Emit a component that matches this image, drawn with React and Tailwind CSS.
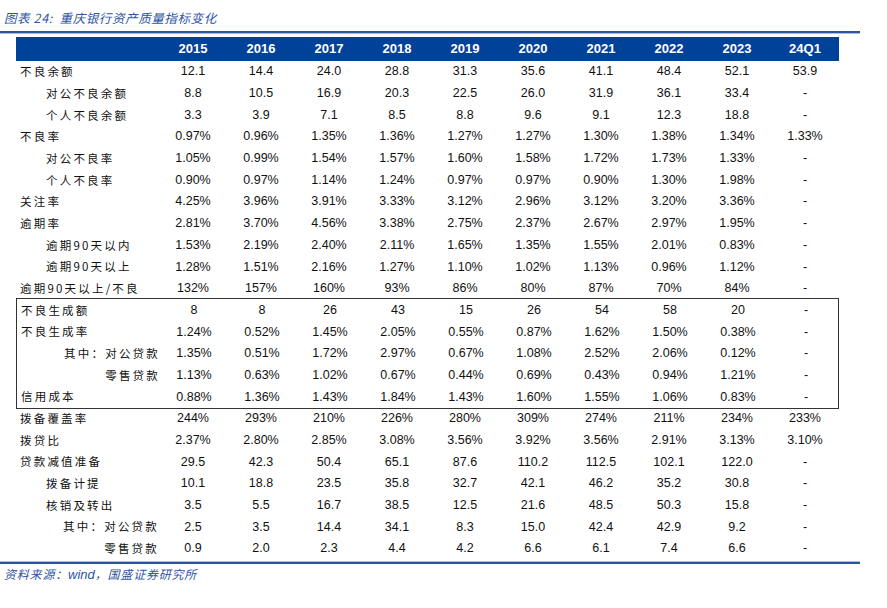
const years = ["2015", "2016", "2017", "2018", "2019", "2020", "2021", "2022", "2023", "24Q1"];

// level: 0 = flush left, 1 = indented, 2 = right aligned sub-item
const rows = [
  { label: "不良余额", level: 0, v: ["12.1", "14.4", "24.0", "28.8", "31.3", "35.6", "41.1", "48.4", "52.1", "53.9"] },
  { label: "对公不良余额", level: 1, v: ["8.8", "10.5", "16.9", "20.3", "22.5", "26.0", "31.9", "36.1", "33.4", "-"] },
  { label: "个人不良余额", level: 1, v: ["3.3", "3.9", "7.1", "8.5", "8.8", "9.6", "9.1", "12.3", "18.8", "-"] },
  { label: "不良率", level: 0, v: ["0.97%", "0.96%", "1.35%", "1.36%", "1.27%", "1.27%", "1.30%", "1.38%", "1.34%", "1.33%"] },
  { label: "对公不良率", level: 1, v: ["1.05%", "0.99%", "1.54%", "1.57%", "1.60%", "1.58%", "1.72%", "1.73%", "1.33%", "-"] },
  { label: "个人不良率", level: 1, v: ["0.90%", "0.97%", "1.14%", "1.24%", "0.97%", "0.97%", "0.90%", "1.30%", "1.98%", "-"] },
  { label: "关注率", level: 0, v: ["4.25%", "3.96%", "3.91%", "3.33%", "3.12%", "2.96%", "3.12%", "3.20%", "3.36%", "-"] },
  { label: "逾期率", level: 0, v: ["2.81%", "3.70%", "4.56%", "3.38%", "2.75%", "2.37%", "2.67%", "2.97%", "1.95%", "-"] },
  { label: "逾期90天以内", level: 1, v: ["1.53%", "2.19%", "2.40%", "2.11%", "1.65%", "1.35%", "1.55%", "2.01%", "0.83%", "-"] },
  { label: "逾期90天以上", level: 1, v: ["1.28%", "1.51%", "2.16%", "1.27%", "1.10%", "1.02%", "1.13%", "0.96%", "1.12%", "-"] },
  { label: "逾期90天以上/不良", level: 0, v: ["132%", "157%", "160%", "93%", "86%", "80%", "87%", "70%", "84%", "-"] },
];

const boxed = [
  { label: "不良生成额", level: 0, v: ["8", "8", "26", "43", "15", "26", "54", "58", "20", "-"] },
  { label: "不良生成率", level: 0, v: ["1.24%", "0.52%", "1.45%", "2.05%", "0.55%", "0.87%", "1.62%", "1.50%", "0.38%", "-"] },
  { label: "其中：对公贷款", level: 2, v: ["1.35%", "0.51%", "1.72%", "2.97%", "0.67%", "1.08%", "2.52%", "2.06%", "0.12%", "-"] },
  { label: "零售贷款", level: 2, v: ["1.13%", "0.63%", "1.02%", "0.67%", "0.44%", "0.69%", "0.43%", "0.94%", "1.21%", "-"] },
  { label: "信用成本", level: 0, v: ["0.88%", "1.36%", "1.43%", "1.84%", "1.43%", "1.60%", "1.55%", "1.06%", "0.83%", "-"] },
];

const rest = [
  { label: "拨备覆盖率", level: 0, v: ["244%", "293%", "210%", "226%", "280%", "309%", "274%", "211%", "234%", "233%"] },
  { label: "拨贷比", level: 0, v: ["2.37%", "2.80%", "2.85%", "3.08%", "3.56%", "3.92%", "3.56%", "2.91%", "3.13%", "3.10%"] },
  { label: "贷款减值准备", level: 0, v: ["29.5", "42.3", "50.4", "65.1", "87.6", "110.2", "112.5", "102.1", "122.0", "-"] },
  { label: "拨备计提", level: 1, v: ["10.1", "18.8", "23.5", "35.8", "32.7", "42.1", "46.2", "35.2", "30.8", "-"] },
  { label: "核销及转出", level: 1, v: ["3.5", "5.5", "16.7", "38.5", "12.5", "21.6", "48.5", "50.3", "15.8", "-"] },
  { label: "其中：对公贷款", level: 2, v: ["2.5", "3.5", "14.4", "34.1", "8.3", "15.0", "42.4", "42.9", "9.2", "-"] },
  { label: "零售贷款", level: 2, v: ["0.9", "2.0", "2.3", "4.4", "4.2", "6.6", "6.1", "7.4", "6.6", "-"] },
];

const cjk = "font-['Noto_Sans_CJK_SC',sans-serif]";
const num = "font-['Liberation_Sans',Arial,sans-serif]";

const Row = ({ row }) => (
  <div className="flex h-[21.68px] items-center text-[#111]">
    <div
      className={`w-[143px] shrink-0 ${cjk} text-[11.5px] tracking-[2.2px] ${
        row.level === 0 ? "pl-[4px]" : row.level === 1 ? "pl-[30px]" : "text-right"
      }`}
    >
      {row.label}
    </div>
    {row.v.map((x, i) => (
      <div key={i} className={`w-[68px] shrink-0 text-center ${num} text-[12.5px]`}>
        {x}
      </div>
    ))}
  </div>
);

export default function App() {
  return (
    <div className="w-[887px] h-[608px] bg-white">
      {/* TITLE */}
      <div className="h-[31px] pl-[4px] pt-[9px] italic text-[#2f55a4] text-[12.5px] font-['Noto_Sans_CJK_SC',sans-serif] leading-[17px] tracking-[0.6px]">
        图表 24:&nbsp; 重庆银行资产质量指标变化
      </div>
      <div className="w-[860px] h-[2px] bg-[#2b55a3]" />
      <div className="w-[860px] h-[1px] bg-[#a9bddf]" />

      {/* TABLE */}
      <div className="ml-[16px] mt-[3px] w-[823px]">
        <div className="flex h-[24px] items-center bg-[#00419a] text-white">
          <div className="w-[143px] shrink-0" />
          {years.map((y) => (
            <div key={y} className={`w-[68px] shrink-0 text-center font-bold text-[13px] ${num}`}>
              {y}
            </div>
          ))}
        </div>

        {rows.map((r) => (
          <Row key={r.label} row={r} />
        ))}

        {/* BOXED: border overlaps neighbours so rows keep their pitch */}
        <div className="relative -my-[1px] border border-[#333] w-[823px]">
          {boxed.map((r) => (
            <Row key={r.label} row={r} />
          ))}
        </div>

        {rest.map((r, i) => (
          <Row key={r.label + i} row={r} />
        ))}
      </div>

      {/* SOURCE */}
      <div className="mt-[2px] w-[860px] h-[1px] bg-[#a9bddf]" />
      <div className="w-[860px] h-[2px] bg-[#2b55a3]" />
      <div className="pl-[4px] pt-[1px] italic text-[#2f55a4] text-[12px] font-['Noto_Sans_CJK_SC',sans-serif] leading-[17px] tracking-[0.8px]">
        资料来源：<span className="font-['Liberation_Sans',Arial,sans-serif] text-[13px] tracking-normal">wind</span>，国盛证券研究所
      </div>
    </div>
  );
}
